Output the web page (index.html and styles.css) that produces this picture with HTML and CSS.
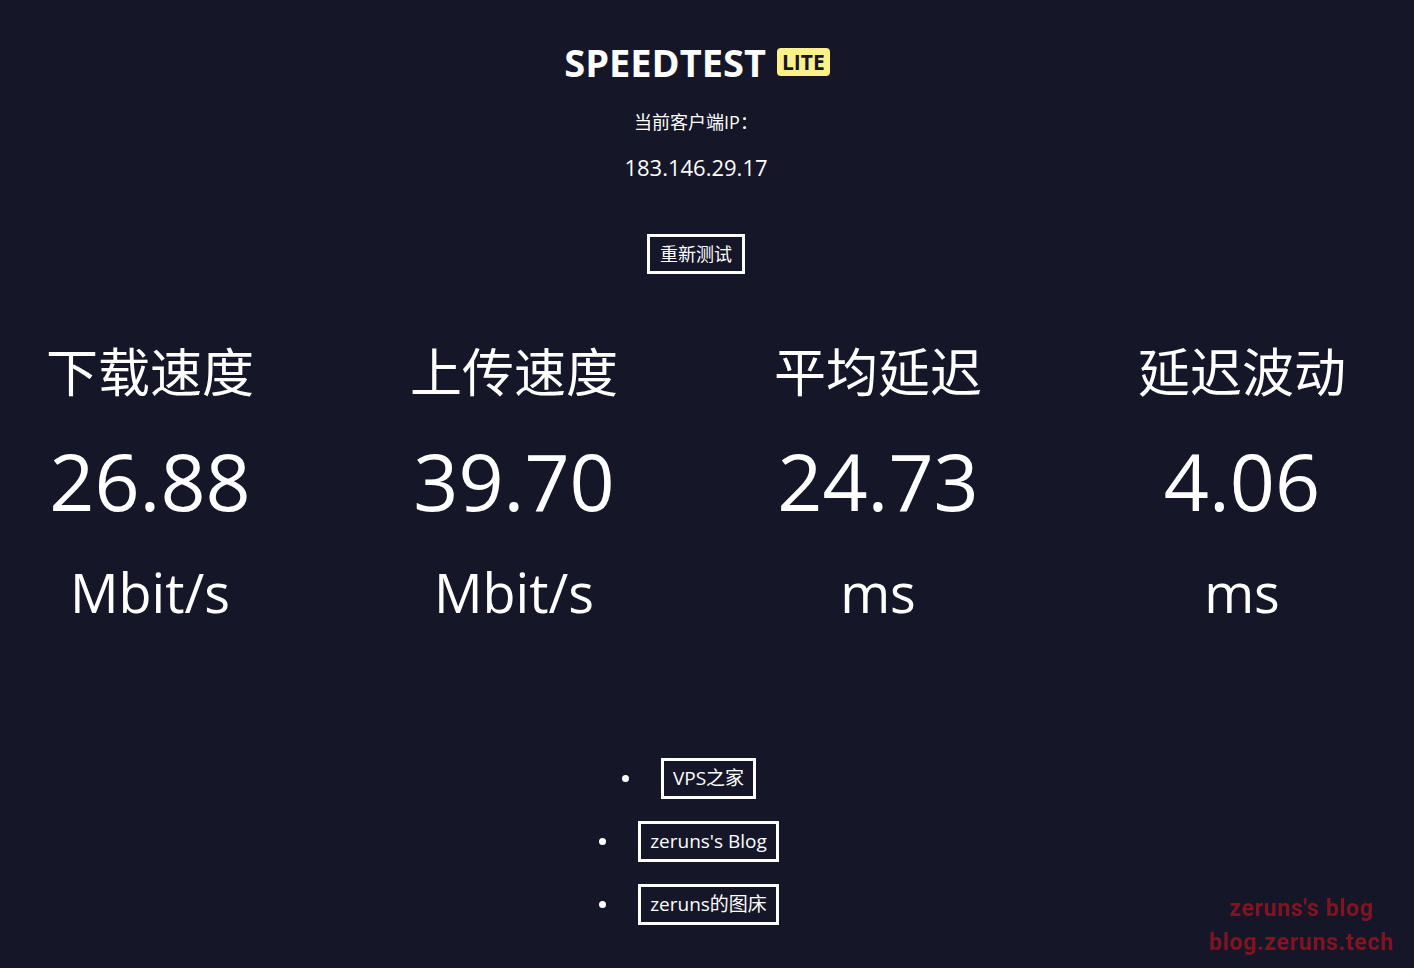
FILE: index.html
```html
<!DOCTYPE html>
<html lang="zh-CN">
<head>
<meta charset="utf-8">
<title>SPEEDTEST LITE</title>
<link rel="stylesheet" href="styles.css">
</head>
<body>
<div class="page">
  <header class="header">
    <h1 class="title">SPEEDTEST<span class="badge">LITE</span></h1>
    <p class="ip-label">当前客户端IP：</p>
    <p class="ip">183.146.29.17</p>
    <button class="btn">重新测试</button>
  </header>
  <section class="stats">
    <div class="stat">
      <div class="label">下载速度</div>
      <div class="value">26.88</div>
      <div class="unit">Mbit/s</div>
    </div>
    <div class="stat">
      <div class="label">上传速度</div>
      <div class="value">39.70</div>
      <div class="unit">Mbit/s</div>
    </div>
    <div class="stat">
      <div class="label">平均延迟</div>
      <div class="value">24.73</div>
      <div class="unit">ms</div>
    </div>
    <div class="stat">
      <div class="label">延迟波动</div>
      <div class="value">4.06</div>
      <div class="unit">ms</div>
    </div>
  </section>
  <ul class="links">
    <li><a class="link" href="#">VPS之家</a></li>
    <li><a class="link" href="#">zeruns's Blog</a></li>
    <li><a class="link" href="#">zeruns的图床</a></li>
  </ul>
</div>
<div class="watermark">zeruns's blog<br>blog.zeruns.tech</div>
</body>
</html>
```

FILE: styles.css
```css
html, body {
  margin: 0;
  padding: 0;
  background: #151628;
  color: #ffffff;
  font-family: "Open Sans", "Noto Sans CJK SC", sans-serif;
  height: 100%;
  overflow: hidden;
}
.page {
  width: 1392px;
}
.header {
  display: flex;
  flex-direction: column;
  align-items: center;
  padding-top: 38px;
}
.title {
  margin: 0;
  font-size: 38px;
  font-weight: 700;
  line-height: 48px;
  display: flex;
  align-items: center;
  padding-left: 2px;
}
.badge {
  margin-left: 11px;
  background: #fff18a;
  color: #151628;
  font-size: 21px;
  line-height: 28px;
  padding: 0 5px;
  border-radius: 4px;
  font-weight: 700;
}
.ip-label {
  margin: 23px 0 0;
  font-size: 18px;
  line-height: 26px;
}
.ip {
  margin: 17px 0 0;
  font-size: 22px;
  line-height: 30px;
}
.btn {
  margin-top: 52px;
  background: transparent;
  color: #fff;
  border: 3px solid #fff;
  font-family: inherit;
  font-size: 18px;
  line-height: 26px;
  padding: 4px 10px;
  cursor: pointer;
}
.stats {
  margin: 66px 0 0 8px;
  display: grid;
  grid-template-columns: repeat(4, 284px);
  column-gap: 80px;
}
.stat {
  display: flex;
  flex-direction: column;
  align-items: center;
}
.label {
  font-size: 52px;
  line-height: 64px;
}
.value {
  font-size: 79px;
  line-height: 110px;
  margin-top: 22px;
}
.unit {
  font-size: 54px;
  line-height: 70px;
  margin-top: 21px;
}
.links {
  list-style: disc;
  margin: 131px 0 0;
  padding: 0 0 0 6px;
  display: flex;
  flex-direction: column;
  align-items: center;
  gap: 22px;
}
.links li {
  font-size: 19px;
  line-height: 27px;
}
.link {
  display: inline-block;
  color: #fff;
  text-decoration: none;
  border: 3px solid #fff;
  padding: 4px 9px;
  margin-left: 19px;
}
.watermark {
  position: fixed;
  right: 20px;
  bottom: 8px;
  text-align: center;
  color: #8e1522;
  font-family: "Roboto", "Liberation Sans", sans-serif;
  font-weight: 700;
  font-size: 23px;
  line-height: 34px;
  letter-spacing: 0.7px;
  opacity: 0.9;
}
```
